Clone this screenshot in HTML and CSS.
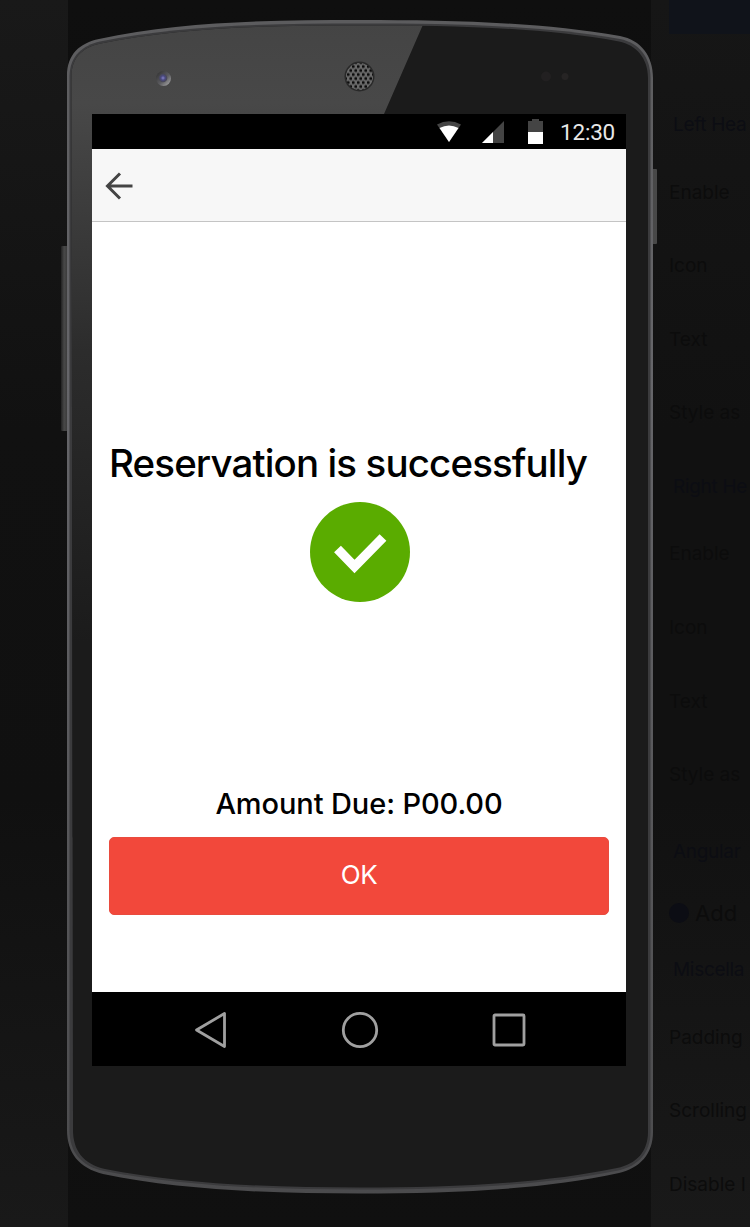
FILE: index.html
```html
<!DOCTYPE html>
<html lang="en">
<head>
<meta charset="utf-8">
<title>Reservation</title>
<link rel="stylesheet" href="styles.css">
</head>
<body>
<div class="page">
  <div class="gutter"></div>
  <main class="stage">
    <div class="phone">
      <svg class="phone-body" width="604" height="1227" viewBox="58 0 604 1227" aria-hidden="true">
        <defs>
          <linearGradient id="edge" x1="0" y1="0" x2="0" y2="1">
            <stop offset="0" stop-color="#5c5c5e"/><stop offset=".3" stop-color="#66666a"/><stop offset="1" stop-color="#4b4b4d"/>
          </linearGradient>
          <linearGradient id="sheen" x1="0" y1="0" x2="0" y2="1">
            <stop offset="0" stop-color="#444"/><stop offset=".1" stop-color="#484848"/><stop offset=".4" stop-color="#2c2c2c"/><stop offset=".75" stop-color="#1b1b1b"/>
          </linearGradient>
          <linearGradient id="key" x1="0" y1="0" x2="1" y2="0">
            <stop offset="0" stop-color="#222"/><stop offset=".4" stop-color="#484848"/><stop offset="1" stop-color="#333"/>
          </linearGradient>
          <linearGradient id="rim" x1="0" y1="0" x2="1" y2="1"><stop offset="0" stop-color="#2c2c2c"/><stop offset=".55" stop-color="#5c5c60"/><stop offset="1" stop-color="#b0b0b0"/></linearGradient>
          <radialGradient id="lens"><stop offset="0" stop-color="#8583c8"/><stop offset=".5" stop-color="#4b4a80"/><stop offset="1" stop-color="#47474f"/></radialGradient>
          <pattern id="mesh" width="5" height="8" patternUnits="userSpaceOnUse" patternTransform="translate(357 72.500)">
            <rect width="5" height="8" fill="#6a6a6a"/><circle cx="1.250" cy="2" r="1.500" fill="#0c0c0c"/><circle cx="3.750" cy="6" r="1.500" fill="#0c0c0c"/>
          </pattern>
          <clipPath id="face"><path d="M71.500 76C72 56 84 47 101 43.500C180 27 270 25.500 360 25.500S540 27 619 41.500C636 45 648 58 648 78V1132C648 1151 637 1164 617 1168C540 1184 450 1187.500 360 1187.500S180 1184 105 1169C83 1164 73 1150 73 1130Z"/></clipPath>
        </defs>
        <rect x="61" y="246" width="8" height="185" rx="1" fill="url(#key)"/>
        <rect x="651" y="169" width="6" height="75" rx="1" fill="#484848"/>
        <path d="M67 76C67 54 80 43 99 39C180 21.500 270 20 360 20S540 22 620 36C641 40 653 56 653 78V1132C653 1154 640 1168 619 1173C540 1190 450 1193.500 360 1193.500S180 1190 103 1174C79 1168 67 1153 67 1130Z" fill="url(#edge)"/>
        <path d="M69.500 76C70 55 83 45.500 100 41.500C180 25 270 23.500 360 23.500S540 25 620 39C639 43 650.500 57 650.500 78V1132C650.500 1152 639 1166 618 1170.500C540 1186 450 1189.500 360 1189.500S180 1186 104 1171C80 1166 69.500 1151 69.500 1130Z" fill="#3b3b3d"/>
        <g clip-path="url(#face)">
          <rect x="67" y="20" width="586" height="1174" fill="#1b1b1b"/>
          <path d="M67 20H425L384 114L67 850Z" fill="url(#sheen)"/>
        </g>
        <circle cx="163.500" cy="78.500" r="7.500" fill="url(#rim)"/>
        <circle cx="163" cy="78" r="4.300" fill="url(#lens)"/>
        <circle cx="359.500" cy="76.500" r="15" fill="#292929"/>
        <circle cx="359.500" cy="76.500" r="13.500" fill="url(#mesh)"/>
        <circle cx="546" cy="76.500" r="5" fill="#222021"/><circle cx="565" cy="76.500" r="3.500" fill="#262424"/>
      </svg>
      <div class="screen">
        <header class="status">
          <svg width="24" height="24" viewBox="0 0 24 24"><path d="M0 4.500Q12-2 24 4.500L12 22Z" fill="#454545"/><path d="M2.500 8Q12 3 21.500 8L12 22Z" fill="#fff"/></svg>
          <svg class="signal" width="22" height="23" viewBox="0 0 22 23"><path d="M0 23L22 1V23Z" fill="#444"/><path d="M0 23L11 12V23Z" fill="#fff"/></svg>
          <svg class="battery" width="15" height="25" viewBox="0 0 15 25"><path d="M0 2H4V0H11V2H15V13H0Z" fill="#444"/><path d="M0 13H15V25H0Z" fill="#fff"/></svg>
          <span class="clock">12:30</span>
        </header>
        <nav class="toolbar">
          <svg width="28" height="28" viewBox="0 0 28 28" fill="none" stroke="#444" stroke-width="3"><path d="M27.500 14H3M15 1.500L2.500 14L15 26.500"/></svg>
        </nav>
        <section class="content">
          <h1 class="title">Reservation is successfully</h1>
          <svg class="success" width="100" height="100" viewBox="0 0 100 100"><circle cx="50" cy="50" r="50" fill="#5aac00"/><path d="M27.500 47L44.500 64.500L73 35.500" fill="none" stroke="#fff" stroke-width="9.500"/></svg>
          <p class="amount">Amount Due: P00.00</p>
          <button class="ok">OK</button>
        </section>
        <footer class="keys">
          <svg width="34" height="38" viewBox="0 0 34 38"><path d="M2.500 19L30.500 2.500V35.500Z"/></svg>
          <svg width="38" height="38" viewBox="0 0 38 38"><circle cx="19" cy="19" r="16.700"/></svg>
          <svg width="34" height="34" viewBox="0 0 34 34"><rect x="2" y="2" width="30" height="30" rx="1"/></svg>
        </footer>
      </div>
    </div>
  </main>
  <aside class="panel">
    <div class="panel-button"></div>
    <div class="row head first">Left Hea</div>
    <div class="row after-head">Enable</div>
    <div class="row">Icon</div>
    <div class="row">Text</div>
    <div class="row">Style as</div>
    <div class="row head">Right He</div>
    <div class="row after-head">Enable</div>
    <div class="row">Icon</div>
    <div class="row">Text</div>
    <div class="row">Style as</div>
    <div class="row head angular">Angular</div>
    <div class="row add"><span class="dot"></span>Add</div>
    <div class="row head misc">Miscella</div>
    <div class="row after-head">Padding</div>
    <div class="row">Scrolling</div>
    <div class="row">Disable I</div>
  </aside>
</div>
</body>
</html>
```
FILE: styles.css
```css
* { box-sizing: border-box; }
body {
  margin: 0;
  background: #111;
  font-family: Inter, "Liberation Sans", sans-serif;
}
.page {
  display: grid;
  grid-template-columns: 68px 583px 99px;
  width: 750px;
  height: 1227px;
  overflow: hidden;
}
.gutter { background: linear-gradient(#191919, #111 35%, #101010 65%, #191919); }
.stage { background: linear-gradient(#0f0f0f, #0c0c0c 50%, #101010); }
.phone {
  position: relative;
  z-index: 1;
  padding: 114px 25px 0 24px;
}
.phone-body {
  position: absolute;
  top: 0;
  left: -10px;
}
.screen {
  position: relative;
  display: flex;
  flex-direction: column;
  width: 534px;
  height: 952px;
  background: #fff;
}
.status {
  display: flex;
  align-items: center;
  height: 35px;
  padding-left: 345px;
  background: #000;
}
.signal { margin-left: 21px; }
.battery { margin-left: 24px; }
.clock {
  margin-left: 17px;
  padding-top: 2px;
  color: #e8e8e8;
  font: 400 22.500px/33px Roboto, sans-serif;
  letter-spacing: -0.2px;
}
.toolbar {
  display: flex;
  align-items: center;
  height: 73px;
  padding: 2px 0 0 13px;
  border-bottom: 1px solid #c4c4c4;
  background: #f7f7f7;
}
.content {
  display: flex;
  flex: 1;
  flex-direction: column;
  padding: 217px 17px 0;
}
.title {
  margin: 0;
  color: #000;
  font-size: 38.500px;
  font-weight: 500;
  line-height: 48px;
  letter-spacing: -0.88px;
  white-space: nowrap;
}
.success { align-self: center; margin: 15px 0 0 1px; }
.amount {
  margin: 184px 0 0;
  color: #000;
  font-size: 29px;
  font-weight: 450;
  line-height: 36px;
  letter-spacing: -0.1px;
  text-align: center;
}
.ok {
  height: 78px;
  margin-top: 15px;
  padding: 0 0 3px;
  border: 1px solid #e94b3e;
  border-radius: 5px;
  background: #f2483b;
  color: #fff;
  font: 400 26px/32px Inter, sans-serif;
  letter-spacing: -0.3px;
}
.keys {
  display: flex;
  align-items: center;
  justify-content: space-between;
  height: 74px;
  padding: 1px 100px 0 102px;
  background: #000;
}
.keys svg {
  fill: none;
  stroke: #a0a0a0;
  stroke-width: 2.800;
  stroke-linejoin: round;
}
.panel {
  overflow: hidden;
  padding-left: 18px;
  background: linear-gradient(#161616, #111 35%, #111 65%, #191919);
}
.panel-button { height: 34px; background: #10131a; }
.row {
  height: 24px;
  margin-top: 49.600px;
  color: #0c0c0c;
  font-size: 19px;
  line-height: 26px;
  white-space: nowrap;
}
.head { padding-left: 4px; color: #0c0d13; font-size: 19px; letter-spacing: -0.3px; }
.first { margin-top: 78px; }
.after-head { margin-top: 43.500px; }
.angular { margin-top: 53px; }
.add {
  display: flex;
  align-items: center;
  gap: 6px;
  margin-top: 38px;
  font-size: 22px;
}
.misc { margin-top: 32px; }
.dot { width: 20px; height: 20px; border-radius: 50%; background: #0c0d14; }
```
